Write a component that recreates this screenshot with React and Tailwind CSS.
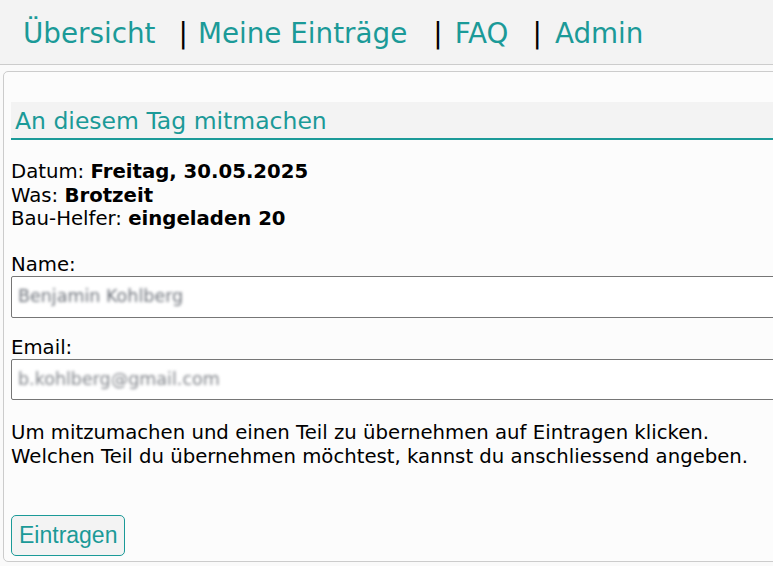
export default function App() {
  const teal = "text-[#1b9a98]";
  return (
    <div
      className="w-[773px] h-[566px] overflow-hidden bg-[#fafafa] text-black"
      style={{ fontFamily: '"DejaVu Sans", Verdana, sans-serif' }}
    >
      <header className="h-[65px] border-b border-[#cccccc] bg-[#f3f3f3] flex items-center pl-[23px] pt-[3px] text-[27.8px]">
        <a className={teal}>Übersicht</a>
        <span className="ml-[23px]">|</span>
        <a className={`${teal} ml-[10px]`}>Meine Einträge</a>
        <span className="ml-[26px]">|</span>
        <a className={`${teal} ml-[12px]`}>FAQ</a>
        <span className="ml-[24px]">|</span>
        <a className={`${teal} ml-[13px]`}>Admin</a>
      </header>
      <div className="pl-[3px] pt-[6px]">
        <div className="w-[830px] border border-[#cccccc] rounded-[5px] bg-[#fcfcfc] pt-[30px] pl-[7px] pb-[5px]">
          <h2 className={`h-[38px] bg-[#f3f3f3] border-b-2 border-[#1b9a98] flex items-center pl-[4px] pt-[4px] text-[23.5px] font-normal ${teal}`}>
            An diesem Tag mitmachen
          </h2>
          <div className="mt-[20px] text-[19.7px] leading-[23.5px]">
            <div>
              Datum: <b>Freitag, 30.05.2025</b>
            </div>
            <div>
              Was: <b>Brotzeit</b>
            </div>
            <div>
              Bau-Helfer: <b>eingeladen 20</b>
            </div>
          </div>
          <div className="mt-[23px] text-[19.7px] leading-[22px]">Name:</div>
          <div className="h-[42px] border border-[#767676] rounded-[2px] bg-white flex items-center pl-[6px] text-[17.5px]">
            <span className="blur-[1.4px] text-[#6f747c]">Benjamin Kohlberg</span>
          </div>
          <div className="mt-[19px] text-[19.7px] leading-[22px]">Email:</div>
          <div className="h-[41px] border border-[#767676] rounded-[2px] bg-white flex items-center pl-[6px] text-[17.5px]">
            <span className="blur-[1.4px] text-[#80848a]">b.kohlberg@gmail.com</span>
          </div>
          <p className="mt-[21.5px] text-[19.7px] leading-[23.5px]">
            Um mitzumachen und einen Teil zu übernehmen auf Eintragen klicken.
            <br />
            Welchen Teil du übernehmen möchtest, kannst du anschliessend angeben.
          </p>
          <button
            className={`mt-[47px] h-[41px] px-[7px] border border-[#1b9a98] rounded-[5px] bg-[#f3f3f3] text-[23px] ${teal}`}
            style={{ fontFamily: '"Liberation Sans", Arial, sans-serif' }}
          >
            Eintragen
          </button>
        </div>
      </div>
    </div>
  );
}
